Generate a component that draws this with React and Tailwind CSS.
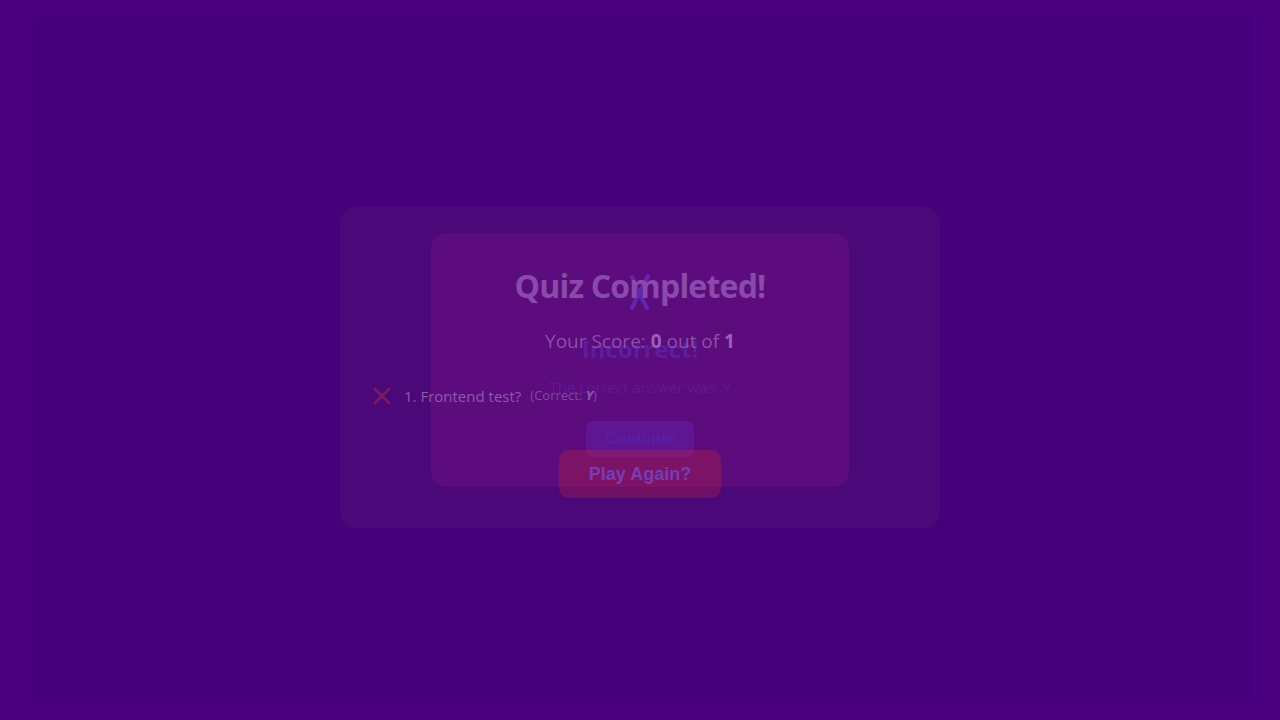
export default function App() {
  const sans = { fontFamily: '"Open Sans", "Noto Sans", sans-serif' }
  const arial = { fontFamily: '"Liberation Sans", Arial, sans-serif' }

  return (
    <div className="min-h-screen bg-[#4b0082] pt-4 pb-[17px] pl-8 pr-[30px]" style={sans}>
      <div className="h-[687px] bg-[#46007a] flex justify-center pt-[191px] pr-[2px]">
        <div className="relative w-[600px] h-[321px] rounded-2xl bg-[#4a0878] px-8 pb-[30px]">
          {/* answer feedback modal sitting behind the results text */}
          <div className="absolute left-[91px] top-[26px] w-[418px] h-[254px] rounded-2xl bg-[#5c0c7c] flex flex-col items-center">
            <svg width="26" height="38" viewBox="0 0 26 38" className="mt-[40px]">
              <path d="M5 4 C9 14 15 26 20 35" stroke="#6226b0" strokeWidth="4" strokeLinecap="round" fill="none" />
              <path d="M21 3 C15 14 10 24 5 35" stroke="#6226b0" strokeWidth="4" strokeLinecap="round" fill="none" />
            </svg>
            <div className="mt-[23px] text-[24px] leading-[30px] font-bold text-[#5c1ea0]">Incorrect!</div>
            <div className="mt-[11px] text-[15px] leading-6 text-[#5f1a94]">The correct answer was: Y</div>
            <button
              type="button"
              className="mt-[22px] w-[108px] h-[36px] rounded-lg bg-[#601692] text-base font-bold text-[#5a1ea2]"
              style={arial}
            >
              Continue
            </button>
          </div>

          <div className="relative z-10 flex flex-col h-full">
            <h1 className="mt-[60px] text-center text-[32px] leading-[38px] font-bold text-[#8a4aac] tracking-[-0.8px]">
              Quiz Completed!
            </h1>
            <p className="mt-[22px] text-center text-[19px] leading-7 text-[#8a50aa]">
              Your Score: <span className="font-bold text-[#9a60ba]">0</span> out of{' '}
              <span className="font-bold text-[#9a60ba]">1</span>
            </p>
            <div className="mt-[29px] flex items-center gap-3 h-6">
              <svg width="20" height="20" viewBox="0 0 20 20" className="shrink-0">
                <path d="M3 3 L17 17 M17 3 L3 17" stroke="#7a1868" strokeWidth="3" strokeLinecap="round" />
              </svg>
              <span className="text-[15px] text-[#8a5aac]">1. Frontend test?</span>
              <span className="text-[13px] text-[#7e4aa4] -ml-[3px]">
                (Correct: <span className="font-bold italic text-[#8f5ab2]">Y</span>)
              </span>
            </div>
            <div className="mt-auto flex justify-center">
              <button
                type="button"
                className="w-[162px] h-[48px] rounded-[10px] bg-[#dc2626]/25 text-lg font-bold text-[#7a3cb2]"
                style={arial}
              >
                Play Again?
              </button>
            </div>
          </div>
        </div>
      </div>
    </div>
  )
}
